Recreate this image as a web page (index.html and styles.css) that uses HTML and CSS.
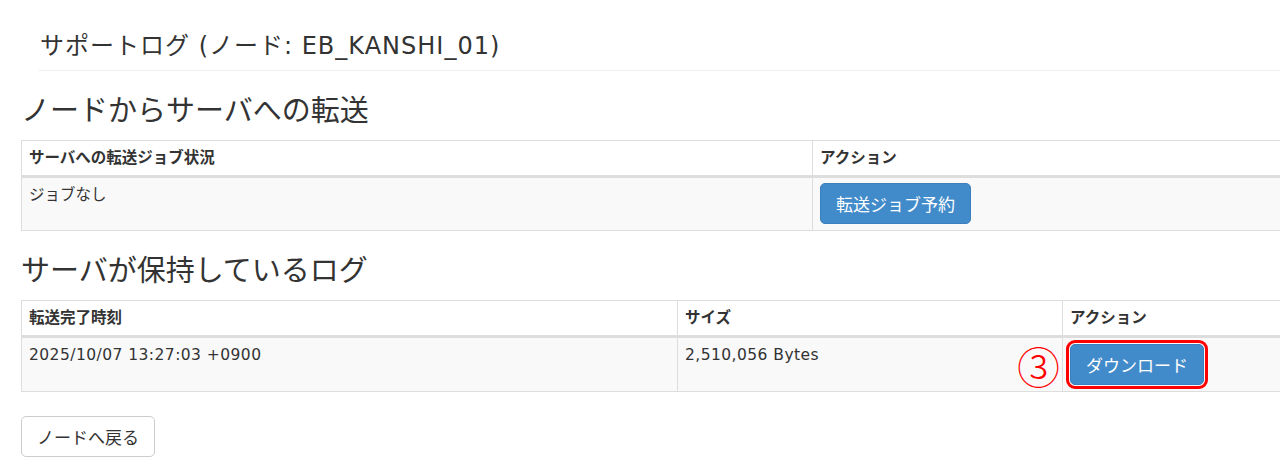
FILE: index.html
```html
<!DOCTYPE html>
<html lang="ja">
<head>
<meta charset="utf-8">
<title>サポートログ</title>
<link rel="stylesheet" href="styles.css">
</head>
<body>
<div class="page">
  <div class="page-header">
    <h1 class="title">サポートログ (ノード: EB_KANSHI_01)</h1>
  </div>

  <h3 class="section-title">ノードからサーバへの転送</h3>
  <div class="table-wrap">
    <table class="table table-1">
      <thead>
        <tr><th class="c1">サーバへの転送ジョブ状況</th><th>アクション</th></tr>
      </thead>
      <tbody>
        <tr><td class="c1">ジョブなし</td><td><button class="btn btn-primary">転送ジョブ予約</button></td></tr>
      </tbody>
    </table>
  </div>

  <h3 class="section-title second">サーバが保持しているログ</h3>
  <div class="table-wrap">
    <table class="table table-2">
      <thead>
        <tr><th class="c1">転送完了時刻</th><th class="c2">サイズ</th><th>アクション</th></tr>
      </thead>
      <tbody>
        <tr>
          <td class="c1 data">2025/10/07 13:27:03 +0900</td>
          <td class="c2 data">2,510,056 Bytes</td>
          <td class="action-cell"><span class="step-mark">③</span><button class="btn btn-primary highlighted">ダウンロード</button></td>
        </tr>
      </tbody>
    </table>
  </div>

  <div class="footer-actions">
    <button class="btn btn-default">ノードへ戻る</button>
  </div>
</div>
</body>
</html>
```

FILE: styles.css
```css
html, body {
  margin: 0;
  padding: 0;
  overflow: hidden;
  background: #ffffff;
}

body {
  font-family: "DejaVu Sans", "Noto Sans CJK JP", sans-serif;
  color: #333333;
  font-size: 15.5px;
}

.page {
  padding-left: 21px;
  width: 1600px;
}

.page-header {
  margin-left: 18px;
  padding-top: 32px;
  padding-bottom: 9px;
  border-bottom: 1px solid #eeeeee;
}

.title {
  margin: 0;
  padding-left: 1px;
  font-size: 24px;
  line-height: 29px;
  font-weight: 400;
  letter-spacing: 1px;
}

.section-title {
  margin: 23px 0 11px 0;
  font-size: 29px;
  line-height: 35px;
  font-weight: 400;
}

.section-title.second {
  margin-top: 23px;
  margin-bottom: 11px;
}

.table {
  border-collapse: collapse;
  border-spacing: 0;
  width: 1500px;
  table-layout: fixed;
}

.table th,
.table td {
  border: 1px solid #dddddd;
  padding: 6px 7px;
  line-height: 22px;
  text-align: left;
  vertical-align: top;
}

.table th {
  font-weight: 700;
  border-bottom: 3px solid #dddddd;
  background: #ffffff;
}

.table td {
  background: #f9f9f9;
}

.table td.data {
  letter-spacing: 0.45px;
}

.table-1 .c1 { width: 776px; }
.table-2 .c1 { width: 641px; }
.table-2 .c2 { width: 370px; }

.btn {
  display: inline-block;
  font-family: "Noto Sans CJK JP", sans-serif;
  font-size: 17px;
  line-height: 25px;
  padding: 7px 15px;
  border-radius: 5px;
  border: 1px solid transparent;
  cursor: pointer;
  margin: -1px 0 0 0;
}

.btn-primary {
  background: #428bca;
  border-color: #3b80bd;
  color: #ffffff;
}

.btn-default {
  background: #ffffff;
  border-color: #cccccc;
  color: #333333;
}

.action-cell {
  position: relative;
}

.highlighted {
  outline: 3px solid #ff0000;
  outline-offset: 1px;
  margin-top: 0;
}

.step-mark {
  position: absolute;
  left: -46px;
  top: 4px;
  font-family: "Noto Sans CJK JP", sans-serif;
  color: #ff0000;
  font-size: 43px;
  line-height: 46px;
  font-weight: 300;
}

.footer-actions {
  margin-top: 25px;
}
```
